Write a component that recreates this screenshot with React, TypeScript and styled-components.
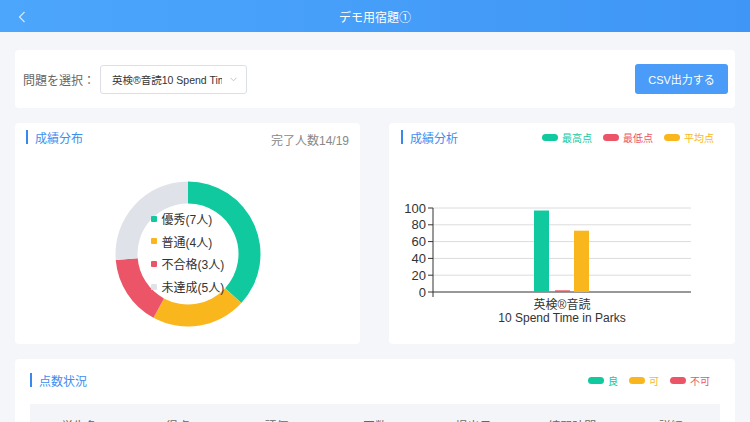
import React from "react";
import styled, { createGlobalStyle } from "styled-components";

const GlobalStyle = createGlobalStyle`
  * { box-sizing: border-box; }
  html, body {
    margin: 0;
    padding: 0;
    background: #f5f6fa;
  }
  body {
    width: 750px;
    height: 422px;
    overflow: hidden;
    font-family: "Liberation Sans", "Noto Sans CJK JP", sans-serif;
  }
`;

const pieData = [
  { label: "優秀", count: 7, color: "#10c99e" },
  { label: "普通", count: 4, color: "#f9b71d" },
  { label: "不合格", count: 3, color: "#eb5567" },
  { label: "未達成", count: 5, color: "#e0e2e9" },
];

const tableCols = ["学生名", "得点", "評価", "回数", "提出日", "練習時間", "詳細"];

const sector = (cx: number, cy: number, r0: number, r1: number, a0: number, a1: number) => {
  const p = (r: number, a: number) => [cx + r * Math.sin(a), cy - r * Math.cos(a)];
  const large = a1 - a0 > Math.PI ? 1 : 0;
  const [x0, y0] = p(r1, a0);
  const [x1, y1] = p(r1, a1);
  const [x2, y2] = p(r0, a1);
  const [x3, y3] = p(r0, a0);
  return `M${x0} ${y0} A${r1} ${r1} 0 ${large} 1 ${x1} ${y1} L${x2} ${y2} A${r0} ${r0} 0 ${large} 0 ${x3} ${y3} Z`;
};

const Donut = () => {
  const total = pieData.reduce((s, d) => s + d.count, 0);
  let start = 0;
  return (
    <svg width="146" height="146" viewBox="0 0 146 146">
      {pieData.map((d) => {
        const end = start + (d.count / total) * Math.PI * 2;
        const path = sector(73, 73, 50.5, 72.5, start, end);
        start = end;
        return <path key={d.label} d={path} fill={d.color} />;
      })}
    </svg>
  );
};

const yTicks = [100, 80, 60, 40, 20, 0];
const yOf = (v: number) => 129 - v * 0.84;

const BarChart = () => (
  <svg width="346" height="181" viewBox="0 0 346 181">
    {yTicks.map((v) => (
      <g key={v}>
        {v > 0 && <line x1="44" x2="302" y1={yOf(v)} y2={yOf(v)} stroke="#dcdcdc" strokeWidth="1" />}
        <line x1="39" x2="44" y1={yOf(v)} y2={yOf(v)} stroke="#333" strokeWidth="1" />
        <text x="37" y={yOf(v) + 4.5} textAnchor="end" fontSize="13" fill="#333">
          {v}
        </text>
      </g>
    ))}
    <line x1="44" x2="44" y1="45" y2="134" stroke="#333" strokeWidth="1" />
    <line x1="44" x2="302" y1="129" y2="129" stroke="#333" strokeWidth="1" />
    <rect x="145" y={yOf(97)} width="15" height={129 - yOf(97)} fill="#10c99e" />
    <rect x="166" y={yOf(2)} width="15" height={129 - yOf(2)} fill="#eb5567" />
    <rect x="185" y={yOf(73)} width="15" height={129 - yOf(73)} fill="#f9b71d" />
    <text x="173" y="146" textAnchor="middle" fontSize="12" fill="#333">
      英検®音読
    </text>
    <text x="173" y="159" textAnchor="middle" fontSize="12" fill="#333">
      10 Spend Time in Parks
    </text>
  </svg>
);

const App = () => {
  return (
    <>
      <GlobalStyle />
      <SHeader>
        <SBack>
          <svg width="8" height="12" viewBox="0 0 8 12">
            <polyline points="6.5,1 1.5,6 6.5,11" fill="none" stroke="rgba(255,255,255,0.75)" strokeWidth="1.2" />
          </svg>
        </SBack>
        <SHeaderTitle>デモ用宿題①</SHeaderTitle>
        <span />
      </SHeader>
      <SMain>
        <SToolbar>
          <SLabel>問題を選択：</SLabel>
          <SSelect>
            <SSelectText>英検®音読10 Spend Time in Parks</SSelectText>
            <svg width="7" height="5" viewBox="0 0 7 5">
              <polyline points="0.5,0.8 3.5,3.8 6.5,0.8" fill="none" stroke="#c0c4cc" strokeWidth="1" />
            </svg>
          </SSelect>
          <SButton>CSV出力する</SButton>
        </SToolbar>

        <SRow>
          <SChartCard>
            <SCardHead $pr={11}>
              <STitle>成績分布</STitle>
              <SCount>完了人数14/19</SCount>
            </SCardHead>
            <SChartBody>
              <SDonutWrap>
                <Donut />
                <SDonutLegend>
                  {pieData.map((d) => (
                    <SDonutItem key={d.label}>
                      <SSquare $color={d.color} />
                      {d.label}({d.count}人)
                    </SDonutItem>
                  ))}
                </SDonutLegend>
              </SDonutWrap>
            </SChartBody>
          </SChartCard>

          <SChartCard>
            <SCardHead $pr={21} $pl={12}>
              <STitle>成績分析</STitle>
              <SLegend>
                <SLegendItem $color="#10c99e">
                  <SPill $color="#10c99e" />
                  最高点
                </SLegendItem>
                <SLegendItem $color="#eb5567">
                  <SPill $color="#eb5567" />
                  最低点
                </SLegendItem>
                <SLegendItem $color="#f9b71d">
                  <SPill $color="#f9b71d" />
                  平均点
                </SLegendItem>
              </SLegend>
            </SCardHead>
            <SChartBody>
              <BarChart />
            </SChartBody>
          </SChartCard>
        </SRow>

        <STableCard>
          <STableHead>
            <STitle>点数状況</STitle>
            <SLegend $mr={10}>
              <SLegendItem $color="#10c99e">
                <SPill $color="#10c99e" />
                良
              </SLegendItem>
              <SLegendItem $color="#f9b71d">
                <SPill $color="#f9b71d" />
                可
              </SLegendItem>
              <SLegendItem $color="#eb5567">
                <SPill $color="#eb5567" />
                不可
              </SLegendItem>
            </SLegend>
          </STableHead>
          <STableHeader>
            {tableCols.map((c) => (
              <span key={c}>{c}</span>
            ))}
          </STableHeader>
        </STableCard>
      </SMain>
    </>
  );
};

export default App;

const SHeader = styled.header`
  height: 32px;
  display: grid;
  grid-template-columns: 80px 1fr 80px;
  align-items: center;
  background: linear-gradient(90deg, #4ca6fb, #3f96f6);
  color: #fff;
`;

const SBack = styled.span`
  display: flex;
  align-items: center;
  padding-left: 18px;
  padding-top: 2px;
`;

const SHeaderTitle = styled.h1`
  margin: 0;
  text-align: center;
  font-size: 12px;
  font-weight: 400;
`;

const SMain = styled.main`
  display: flex;
  flex-direction: column;
  gap: 15px;
  padding: 18px 15px 0;
`;

const SCard = styled.section`
  background: #fff;
  border-radius: 4px;
`;

const SToolbar = styled(SCard)`
  height: 58px;
  display: flex;
  align-items: center;
  padding: 0 7px 0 8px;
`;

const SLabel = styled.span`
  font-size: 12px;
  color: #666;
`;

const SSelect = styled.div`
  width: 147px;
  height: 29px;
  margin-left: 5px;
  display: flex;
  align-items: center;
  gap: 8px;
  padding: 0 9px 0 11px;
  border: 1px solid #dcdfe6;
  border-radius: 3px;
`;

const SSelectText = styled.span`
  flex: 1;
  overflow: hidden;
  white-space: nowrap;
  font-size: 10.5px;
  color: #333;
`;

const SButton = styled.button`
  margin-left: auto;
  width: 93px;
  height: 30px;
  border: none;
  border-radius: 3px;
  background: #4a9cf8;
  color: #fff;
  font-family: inherit;
  font-size: 11px;
`;

const SRow = styled.div`
  display: grid;
  grid-template-columns: 1fr 1fr;
  gap: 29px;
`;

const SChartCard = styled(SCard)`
  height: 221px;
  display: flex;
  flex-direction: column;
`;

const SCardHead = styled.div<{ $pr: number; $pl?: number }>`
  height: 40px;
  display: flex;
  justify-content: space-between;
  align-items: flex-start;
  padding: 7px ${(p) => p.$pr}px 0 ${(p) => p.$pl ?? 11}px;
`;

const STitle = styled.h2`
  margin: 0;
  height: 14px;
  display: flex;
  align-items: center;
  gap: 7px;
  font-size: 12px;
  font-weight: 400;
  color: #3d8ef0;
  &::before {
    content: "";
    width: 2px;
    height: 14px;
    background: #3b88ec;
  }
`;

const SCount = styled.span`
  margin-top: 4px;
  line-height: 14px;
  font-size: 12px;
  color: #888;
`;

const SChartBody = styled.div`
  flex: 1;
  display: flex;
  align-items: center;
  justify-content: center;
`;

const SDonutWrap = styled.div`
  position: relative;
  width: 146px;
  height: 146px;
`;

const SDonutLegend = styled.ul`
  position: absolute;
  left: 36px;
  top: 27px;
  margin: 0;
  padding: 0;
  list-style: none;
`;

const SDonutItem = styled.li`
  height: 22.6px;
  display: flex;
  align-items: center;
  gap: 5px;
  font-size: 12px;
  color: #333;
  white-space: nowrap;
`;

const SSquare = styled.i<{ $color: string }>`
  width: 6px;
  height: 6px;
  border-radius: 1px;
  background: ${(p) => p.$color};
`;

const SLegend = styled.div<{ $mr?: number }>`
  height: 14px;
  display: flex;
  align-items: center;
  gap: 11px;
  margin-right: ${(p) => p.$mr ?? 0}px;
`;

const SLegendItem = styled.span<{ $color: string }>`
  display: flex;
  align-items: center;
  gap: 4px;
  font-size: 10px;
  color: ${(p) => p.$color};
`;

const SPill = styled.i<{ $color: string }>`
  width: 16px;
  height: 7px;
  border-radius: 4px;
  background: ${(p) => p.$color};
`;

const STableCard = styled(SCard)`
  padding: 14px 15px 0;
  height: 80px;
`;

const STableHead = styled.div`
  display: flex;
  justify-content: space-between;
  align-items: center;
  height: 14px;
`;

const STableHeader = styled.div`
  margin-top: 17px;
  display: grid;
  grid-template-columns: repeat(7, 1fr);
  padding: 15px 0;
  background: #f4f5f9;
  font-size: 12px;
  line-height: 16px;
  color: #666;
  text-align: center;
`;
